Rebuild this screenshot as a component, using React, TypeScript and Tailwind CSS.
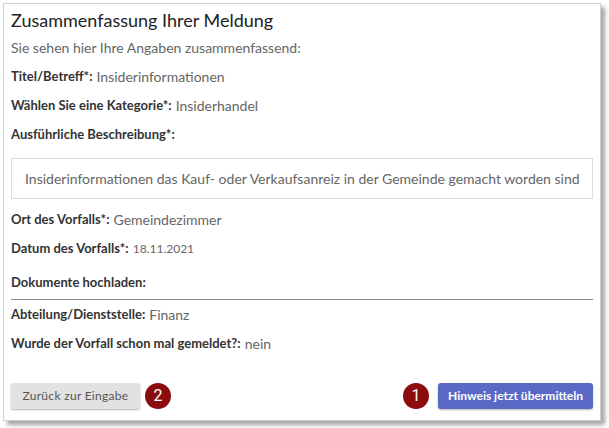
const rows = [
    { label: 'Titel/Betreff*:', value: 'Insiderinformationen' },
    { label: 'Wählen Sie eine Kategorie*:', value: 'Insiderhandel' }
]

function Row({ label, value, small }: { label: string; value?: string; small?: boolean }) {
    return (
        <div className="h-[29px] flex items-center whitespace-nowrap">
            <span className="text-[13px] font-bold text-[#333]">{label}</span>
            {value && <span className={small ? 'ml-1 text-[12px] text-[#666]' : 'ml-1 text-[14px] text-[#666]'}>{value}</span>}
        </div>
    )
}

function Badge({ n }: { n: string }) {
    return (
        <div className="w-[26px] h-[26px] rounded-full bg-[#8a0c0c] text-white text-[16px] flex items-center justify-center font-['Roboto',sans-serif]">
            {n}
        </div>
    )
}

export default function App() {
    return (
        <div className="w-[609px] h-[428px] bg-white pt-[3px] pl-[3px] font-['Lato',sans-serif]">
            <div className="w-[598px] h-[418px] border border-[#d0d0d0] shadow-[4px_4px_4px_rgba(0,0,0,0.35)] px-[7px] pt-[3px] flex flex-col">
                <h3 className="h-[26px] flex items-center text-[18px] text-[#222]">Zusammenfassung Ihrer Meldung</h3>
                <div className="h-[29px] flex items-center text-[14px] text-[#666]">Sie sehen hier Ihre Angaben zusammenfassend:</div>
                {rows.map((r) => (
                    <Row key={r.label} label={r.label} value={r.value} />
                ))}
                <Row label="Ausführliche Beschreibung*:" />
                <div className="mt-[9px] h-[41px] border border-[#dcdcdc] flex items-center pl-[13px] text-[14px] text-[#666] whitespace-nowrap overflow-hidden">
                    Insiderinformationen das Kauf- oder Verkaufsanreiz in der Gemeinde gemacht worden sind
                </div>
                <div className="mt-[6px]">
                    <Row label="Ort des Vorfalls*:" value="Gemeindezimmer" />
                    <Row label="Datum des Vorfalls*:" value="18.11.2021" small />
                </div>
                <div className="mt-[5px]">
                    <Row label="Dokumente hochladen:" />
                </div>
                <div className="mt-[2px] h-px bg-[#8a8a8a]" />
                <div>
                    <Row label="Abteilung/Dienststelle:" value="Finanz" />
                    <Row label="Wurde der Vorfall schon mal gemeldet?:" value="nein" />
                </div>
                <div className="mt-[25px] flex items-center justify-between">
                    <div className="flex items-center gap-[5px]">
                        <button className="w-[129px] h-[26px] rounded-[3px] bg-[#e2e2e2] shadow-[0_1px_2px_rgba(0,0,0,0.3)] text-[12px] text-[#555] tracking-[0.3px]">
                            Zurück zur Eingabe
                        </button>
                        <Badge n="2" />
                    </div>
                    <div className="flex items-center gap-[9px]">
                        <Badge n="1" />
                        <button className="w-[155px] h-[26px] rounded-[3px] bg-[#5b69c6] shadow-[0_1px_2px_rgba(0,0,0,0.3)] text-[12px] font-bold text-white">
                            Hinweis jetzt übermitteln
                        </button>
                    </div>
                </div>
            </div>
        </div>
    )
}
